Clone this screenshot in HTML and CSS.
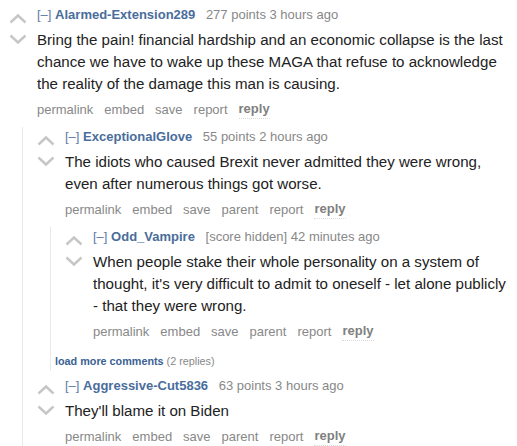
FILE: index.html
```html
<!DOCTYPE html>
<html>
<head>
<meta charset="utf-8">
<link rel="stylesheet" href="styles.css">
</head>
<body>
<div class="page">

  <div class="comment">
    <div class="main">
      <div class="midcol">
        <svg class="arrow" viewBox="0 0 20 11"><path d="M2.5 9.5 L10 2.5 L17.5 9.5"/></svg>
        <svg class="arrow" viewBox="0 0 20 11"><path d="M2.5 1.5 L10 8.5 L17.5 1.5"/></svg>
      </div>
      <div class="entry">
        <p class="tagline"><span class="expand">[–]</span> <span class="author">Alarmed-Extension289</span> <span class="score">277 points</span> 3 hours ago</p>
        <div class="md">Bring the pain! financial hardship and an economic collapse is the last chance we have to wake up these MAGA that refuse to acknowledge the reality of the damage this man is causing.</div>
        <ul class="flat-list"><li>permalink</li><li>embed</li><li>save</li><li>report</li><li class="reply">reply</li></ul>
      </div>
    </div>

    <div class="child">
      <div class="comment">
        <div class="main">
          <div class="midcol">
            <svg class="arrow" viewBox="0 0 20 11"><path d="M2.5 9.5 L10 2.5 L17.5 9.5"/></svg>
            <svg class="arrow" viewBox="0 0 20 11"><path d="M2.5 1.5 L10 8.5 L17.5 1.5"/></svg>
          </div>
          <div class="entry">
            <p class="tagline"><span class="expand">[–]</span> <span class="author">ExceptionalGlove</span> <span class="score">55 points</span> 2 hours ago</p>
            <div class="md">The idiots who caused Brexit never admitted they were wrong, even after numerous things got worse.</div>
            <ul class="flat-list"><li>permalink</li><li>embed</li><li>save</li><li>parent</li><li>report</li><li class="reply">reply</li></ul>
          </div>
        </div>

        <div class="child">
          <div class="comment">
            <div class="main">
              <div class="midcol">
                <svg class="arrow" viewBox="0 0 20 11"><path d="M2.5 9.5 L10 2.5 L17.5 9.5"/></svg>
                <svg class="arrow" viewBox="0 0 20 11"><path d="M2.5 1.5 L10 8.5 L17.5 1.5"/></svg>
              </div>
              <div class="entry">
                <p class="tagline"><span class="expand">[–]</span> <span class="author">Odd_Vampire</span> <span class="score">[score hidden]</span> 42 minutes ago</p>
                <div class="md">When people stake their whole personality on a system of thought, it's very difficult to admit to oneself - let alone publicly - that they were wrong.</div>
                <ul class="flat-list"><li>permalink</li><li>embed</li><li>save</li><li>parent</li><li>report</li><li class="reply">reply</li></ul>
              </div>
            </div>
          </div>
          <div class="more"><span class="more-link">load more comments</span> <span class="more-count">(2 replies)</span></div>
        </div>
      </div>

      <div class="comment">
        <div class="main">
          <div class="midcol">
            <svg class="arrow" viewBox="0 0 20 11"><path d="M2.5 9.5 L10 2.5 L17.5 9.5"/></svg>
            <svg class="arrow" viewBox="0 0 20 11"><path d="M2.5 1.5 L10 8.5 L17.5 1.5"/></svg>
          </div>
          <div class="entry">
            <p class="tagline"><span class="expand">[–]</span> <span class="author">Aggressive-Cut5836</span> <span class="score">63 points</span> 3 hours ago</p>
            <div class="md">They'll blame it on Biden</div>
            <ul class="flat-list"><li>permalink</li><li>embed</li><li>save</li><li>parent</li><li>report</li><li class="reply">reply</li></ul>
          </div>
        </div>
      </div>
    </div>
  </div>

</div>
</body>
</html>
```

FILE: styles.css
```css
html, body {
  margin: 0;
  padding: 0;
  background: #ffffff;
}

.page {
  padding: 5px 8px 0 8px;
  font-family: "Liberation Sans", Arial, sans-serif;
  color: #222222;
}

.comment {
  display: block;
}

.child .comment {
  margin-left: 9px;
}

.main {
  display: flex;
  align-items: flex-start;
}

.midcol {
  width: 29px;
  flex: none;
  display: flex;
  flex-direction: column;
  gap: 10px;
  padding-top: 8px;
}

.arrow {
  display: block;
  width: 20px;
  height: 11px;
}

.arrow path {
  fill: none;
  stroke: #c6c6c6;
  stroke-width: 2.4;
  stroke-linecap: butt;
  stroke-linejoin: miter;
}

.entry {
  flex: 1;
  min-width: 0;
}

.tagline {
  margin: 0;
  font-size: 13px;
  line-height: 20px;
  color: #888888;
}

.expand {
  color: #5b7ba6;
}

.author {
  color: #4a6d9c;
  font-weight: bold;
}

.score {
  margin-left: 7px;
}

.md {
  margin-top: 4px;
  font-size: 15.1px;
  line-height: 22px;
  color: #222222;
}

.flat-list {
  list-style: none;
  margin: 5px 0 0 0;
  padding: 0;
  display: flex;
  gap: 11px;
  font-size: 13px;
  line-height: 20px;
  color: #888888;
}

.flat-list .reply {
  font-weight: bold;
  color: #808080;
  line-height: 17px;
  height: 18px;
  border-bottom: 1px dotted #dcdcdc;
}

.child {
  margin: 7px 0 0 14px;
  border-left: 1px solid #e9e9e9;
  padding-left: 4px;
}

.child .child {
  margin-top: 7px;
}

.child + .comment,
.child .comment + .comment {
  margin-top: 5px;
}

.more {
  margin-top: 11px;
  padding-bottom: 2px;
  font-size: 10.8px;
  line-height: 16px;
}

.more-link {
  color: #3a6294;
  font-weight: bold;
}

.more-count {
  color: #888888;
}
```
